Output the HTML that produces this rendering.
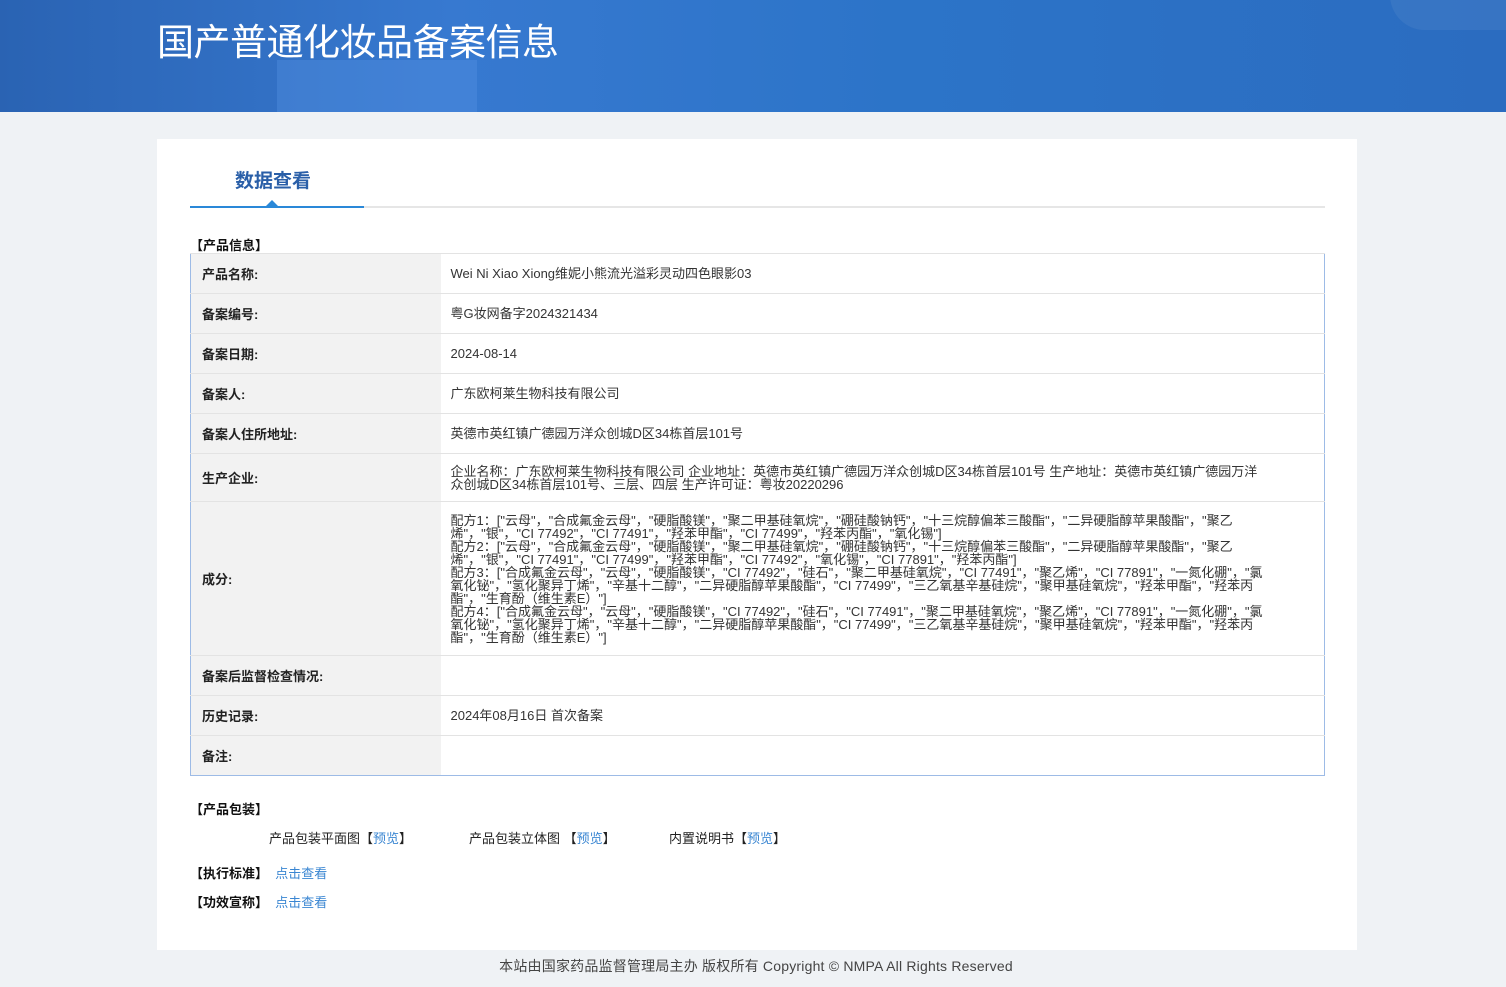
<!DOCTYPE html>
<html><head><meta charset="utf-8"><style>
*{margin:0;padding:0;box-sizing:border-box}
body{width:1506px;height:987px;background:#eff2f5;font-family:"Liberation Sans","Noto Sans CJK SC",sans-serif;color:#333;font-size:13px;position:relative;overflow:hidden}
.hd{position:absolute;left:0;top:0;width:1506px;height:112px;background:linear-gradient(90deg,#2a63b3 0%,#3779d0 30%,#2c74c8 60%,#2b6cc0 100%);overflow:hidden}
.hd .s1{position:absolute;left:277px;top:60px;width:200px;height:52px;background:rgba(90,150,230,.35)}
.hd .s2{position:absolute;left:1390px;top:-40px;width:200px;height:70px;border-radius:40px;background:rgba(255,255,255,.06)}
.hd h1{position:absolute;left:157px;top:12px;font-size:37px;font-weight:normal;color:#fff;letter-spacing:-0.5px}
.box{position:absolute;left:157px;top:139px;width:1200px;height:811px;background:#fff}
.tab{position:absolute;left:78px;top:27px;font-size:19px;font-weight:bold;color:#2a5fa8}
.line{position:absolute;left:33px;top:67px;width:1135px;height:2px;background:#e6e6e6}
.line2{position:absolute;left:33px;top:67px;width:174px;height:2px;background:#2a88d8}
.tri{position:absolute;left:109px;top:61px;width:0;height:0;border-left:6px solid transparent;border-right:6px solid transparent;border-bottom:6px solid #2a88d8}
.sec{position:absolute;font-weight:bold;color:#111;font-size:13px}
table{position:absolute;left:33px;top:114px;width:1135px;border-collapse:collapse;border:1px solid #9dbbe6}
td{border-top:1px solid #e3e3e3;font-size:13px;vertical-align:middle}
td.l{width:250px;background:#f2f2f2;font-weight:bold;color:#222;padding-left:11px}
td.v{padding-left:10px;padding-right:58px;color:#333;line-height:13px}
a{color:#3a86d2;text-decoration:none}
.pk{position:absolute;top:689px;font-size:13px;color:#222}
.ft{position:absolute;left:0;top:956px;width:1512px;text-align:center;font-size:14px;color:#444;letter-spacing:0.2px}
</style></head><body>
<div class="hd"><div class="s1"></div><div class="s2"></div><h1>国产普通化妆品备案信息</h1></div>
<div class="box">
<div class="tab">数据查看</div>
<div class="line"></div><div class="line2"></div><div class="tri"></div>
<div class="sec" style="left:33px;top:96px">【产品信息】</div>
<table>
<tr style="height:40px"><td class="l">产品名称:</td><td class="v">Wei Ni Xiao Xiong维妮小熊流光溢彩灵动四色眼影03</td></tr>
<tr style="height:40px"><td class="l">备案编号:</td><td class="v">粤G妆网备字2024321434</td></tr>
<tr style="height:40px"><td class="l">备案日期:</td><td class="v">2024-08-14</td></tr>
<tr style="height:40px"><td class="l">备案人:</td><td class="v">广东欧柯莱生物科技有限公司</td></tr>
<tr style="height:40px"><td class="l">备案人住所地址:</td><td class="v">英德市英红镇广德园万洋众创城D区34栋首层101号</td></tr>
<tr style="height:48px"><td class="l">生产企业:</td><td class="v">企业名称：广东欧柯莱生物科技有限公司 企业地址：英德市英红镇广德园万洋众创城D区34栋首层101号 生产地址：英德市英红镇广德园万洋众创城D区34栋首层101号、三层、四层 生产许可证：粤妆20220296</td></tr>
<tr style="height:154px"><td class="l">成分:</td><td class="v">配方1：["云母"，"合成氟金云母"，"硬脂酸镁"，"聚二甲基硅氧烷"，"硼硅酸钠钙"，"十三烷醇偏苯三酸酯"，"二异硬脂醇苹果酸酯"，"聚乙烯"，"银"，"CI 77492"，"CI 77491"，"羟苯甲酯"，"CI 77499"，"羟苯丙酯"，"氧化锡"]<br>配方2：["云母"，"合成氟金云母"，"硬脂酸镁"，"聚二甲基硅氧烷"，"硼硅酸钠钙"，"十三烷醇偏苯三酸酯"，"二异硬脂醇苹果酸酯"，"聚乙烯"，"银"，"CI 77491"，"CI 77499"，"羟苯甲酯"，"CI 77492"，"氧化锡"，"CI 77891"，"羟苯丙酯"]<br>配方3：["合成氟金云母"，"云母"，"硬脂酸镁"，"CI 77492"，"硅石"，"聚二甲基硅氧烷"，"CI 77491"，"聚乙烯"，"CI 77891"，"一氮化硼"，"氯氧化铋"，"氢化聚异丁烯"，"辛基十二醇"，"二异硬脂醇苹果酸酯"，"CI 77499"，"三乙氧基辛基硅烷"，"聚甲基硅氧烷"，"羟苯甲酯"，"羟苯丙酯"，"生育酚（维生素E）"]<br>配方4：["合成氟金云母"，"云母"，"硬脂酸镁"，"CI 77492"，"硅石"，"CI 77491"，"聚二甲基硅氧烷"，"聚乙烯"，"CI 77891"，"一氮化硼"，"氯氧化铋"，"氢化聚异丁烯"，"辛基十二醇"，"二异硬脂醇苹果酸酯"，"CI 77499"，"三乙氧基辛基硅烷"，"聚甲基硅氧烷"，"羟苯甲酯"，"羟苯丙酯"，"生育酚（维生素E）"]</td></tr>
<tr style="height:40px"><td class="l">备案后监督检查情况:</td><td class="v"></td></tr>
<tr style="height:40px"><td class="l">历史记录:</td><td class="v">2024年08月16日 首次备案</td></tr>
<tr style="height:40px"><td class="l">备注:</td><td class="v"></td></tr>
</table>
<div class="sec" style="left:33px;top:660px">【产品包装】</div>
<div class="pk" style="left:112px">产品包装平面图【<a>预览</a>】</div>
<div class="pk" style="left:312px">产品包装立体图 【<a>预览</a>】</div>
<div class="pk" style="left:512px">内置说明书【<a>预览</a>】</div>
<div class="sec" style="left:33px;top:724px">【执行标准】 &nbsp;<a style="font-weight:normal">点击查看</a></div>
<div class="sec" style="left:33px;top:753px">【功效宣称】 &nbsp;<a style="font-weight:normal">点击查看</a></div>
</div>
<div class="ft">本站由国家药品监督管理局主办 版权所有 Copyright © NMPA All Rights Reserved</div>
</body></html>
